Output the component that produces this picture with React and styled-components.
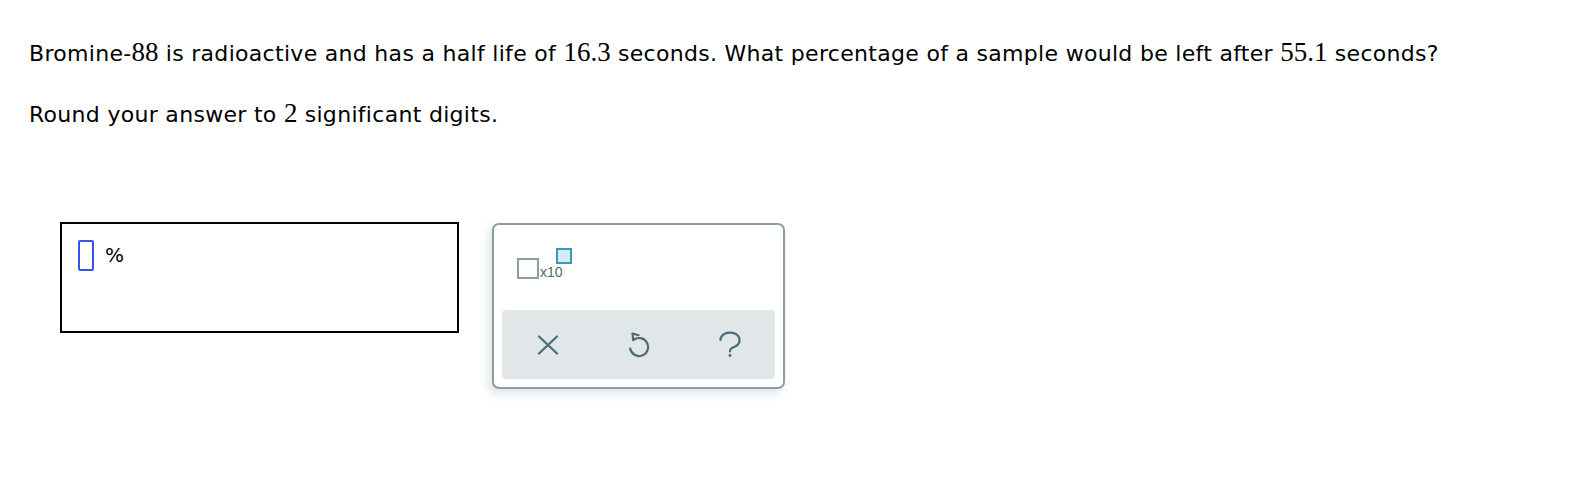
import React from "react";
import styled, { createGlobalStyle } from "styled-components";

const Global = createGlobalStyle`
  html, body { margin: 0; padding: 0; background: #fff; }
  body { font-family: "DejaVu Sans", Verdana, sans-serif; color: #000; }
`;

const Page = styled.div`
  padding: 37px 29px 0 29px;
  width: 1588px;
  height: 504px;
  box-sizing: border-box;
`;

const Para = styled.p`
  margin: 0 0 ${(p) => p.$gap || 0}px 0;
  font-size: 22px;
  letter-spacing: 0.3px;
  line-height: 33px;
  white-space: nowrap;
`;

const Num = styled.span`
  font-family: "Liberation Serif", "Times New Roman", serif;
  font-size: 27px;
  letter-spacing: 0;
  line-height: 0;
`;

const Row = styled.div`
  display: flex;
  align-items: flex-start;
  gap: 33px;
  margin: 91px 0 0 31px;
`;

const AnswerBox = styled.div`
  width: 399px;
  height: 111px;
  box-sizing: border-box;
  border: 2px solid #000;
  padding: 16px;
  display: flex;
  align-items: flex-start;
  gap: 11px;
`;

const Cursor = styled.div`
  width: 16px;
  height: 31px;
  box-sizing: border-box;
  border: 2px solid #3355ee;
  border-radius: 2px;
`;

const Unit = styled.span`
  font-size: 20px;
  line-height: 31px;
`;

const Palette = styled.div`
  margin-top: 1px;
  width: 293px;
  height: 166px;
  box-sizing: border-box;
  border: 2px solid #8a9da5;
  border-radius: 7px;
  padding: 0 8px 8px 8px;
  display: flex;
  flex-direction: column;
  justify-content: space-between;
  box-shadow: -3px 4px 10px rgba(120, 140, 150, 0.25);
  background: #fff;
`;

const SciRow = styled.div`
  display: flex;
  align-items: flex-start;
  padding: 23px 0 0 15px;
`;

const Sci = styled.div`
  display: flex;
  align-items: flex-end;
  height: 31px;
`;

const Mantissa = styled.div`
  width: 22px;
  height: 21px;
  box-sizing: border-box;
  border: 2.5px solid #8a9da5;
`;

const Base = styled.span`
  font-family: "Liberation Sans", Arial, sans-serif;
  font-size: 14px;
  line-height: 14px;
  color: #4f6875;
  margin: 0 0 0 1px;
`;

const Exponent = styled.div`
  width: 16px;
  height: 16px;
  box-sizing: border-box;
  border: 2.5px solid #3e9bb6;
  background: #d4ecf3;
  margin-left: -7px;
  align-self: flex-start;
`;

const ActionBar = styled.div`
  height: 69px;
  background: #e1e6e9;
  border-radius: 4px;
  display: grid;
  grid-template-columns: repeat(3, 1fr);
  align-items: center;
  justify-items: center;
`;

const IconButton = styled.button`
  border: none;
  background: transparent;
  padding: 0;
  width: 26px;
  height: 28px;
  display: flex;
  align-items: center;
  justify-content: center;
  color: #4b6b79;
  cursor: pointer;
`;

const ClearIcon = () => (
  <svg width="22" height="20" viewBox="0 0 22 20" fill="none" stroke="currentColor" strokeWidth="2.2" strokeLinecap="round">
    <path d="M2 1.5 L20 18.5 M20 1.5 L2 18.5" />
  </svg>
);

const UndoIcon = () => (
  <svg width="24" height="27" viewBox="0 0 24 27" fill="none" stroke="currentColor" strokeWidth="2.2" strokeLinecap="round" strokeLinejoin="round">
    <path d="M11.5 4.2 L5.5 2.5 L6.2 9.2 A9 9 0 1 1 3.2 17.5" />
  </svg>
);

const HelpIcon = () => (
  <svg width="24" height="27" viewBox="0 0 24 27" fill="none" stroke="currentColor" strokeWidth="2.2" strokeLinecap="round">
    <path d="M2.5 9 A9.5 7.5 0 1 1 17 15.5 C13.5 17 12 17.5 12 20.5" />
    <circle cx="12" cy="24.5" r="1.4" fill="currentColor" stroke="none" />
  </svg>
);

export default function App() {
  return (
    <>
      <Global />
      <Page>
        <Para $gap={28}>
          Bromine-<Num>88</Num> is radioactive and has a half life of <Num>16.3</Num> seconds. What percentage of a sample would be left after <Num>55.1</Num> seconds?
        </Para>
        <Para>
          Round your answer to <Num>2</Num> significant digits.
        </Para>
        <Row>
          <AnswerBox>
            <Cursor />
            <Unit>%</Unit>
          </AnswerBox>
          <Palette>
            <SciRow>
              <Sci>
                <Mantissa />
                <Base>x10</Base>
                <Exponent />
              </Sci>
            </SciRow>
            <ActionBar>
              <IconButton aria-label="clear"><ClearIcon /></IconButton>
              <IconButton aria-label="undo"><UndoIcon /></IconButton>
              <IconButton aria-label="help"><HelpIcon /></IconButton>
            </ActionBar>
          </Palette>
        </Row>
      </Page>
    </>
  );
}
